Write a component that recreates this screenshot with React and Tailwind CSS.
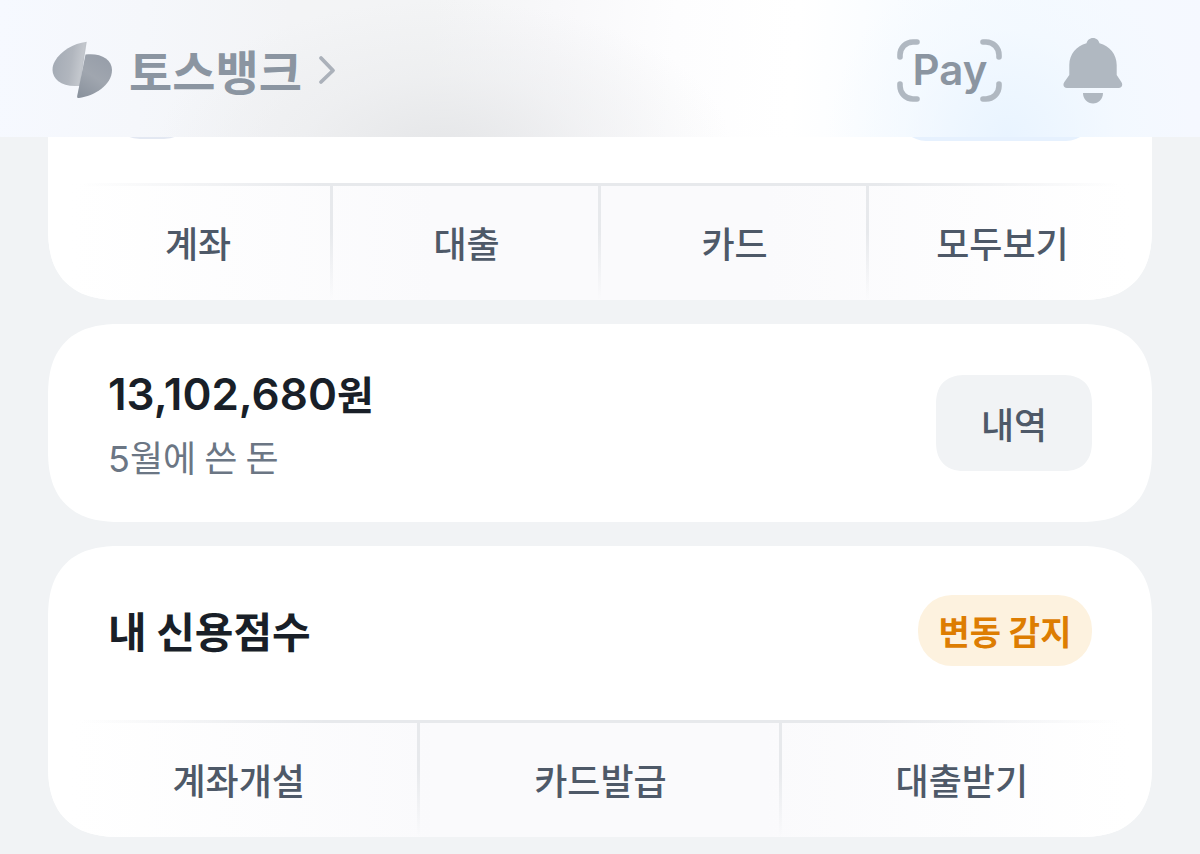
import React from "react";

function BankLogo() {
  return (
    <svg viewBox="0 0 62 58" className="h-[58px] w-[62px] shrink-0" aria-hidden="true">
      <defs>
        <linearGradient id="leafLeft" x1="0" y1="0.3" x2="1" y2="0.5">
          <stop offset="0" stopColor="#a3aab4" />
          <stop offset="0.55" stopColor="#b1b6be" />
          <stop offset="0.85" stopColor="#c3c7cd" />
          <stop offset="1" stopColor="#b5bac2" />
        </linearGradient>
        <linearGradient id="leafRight" x1="0.7" y1="0" x2="0.2" y2="1">
          <stop offset="0" stopColor="#979ea9" />
          <stop offset="0.5" stopColor="#a0a6af" />
          <stop offset="1" stopColor="#8b939e" />
        </linearGradient>
      </defs>
      <path d="M35.7 0.800 C22 2.500 10 10 4 20 C-3 32 5 45 24 45 L29 45 Z" fill="url(#leafLeft)" />
      <path d="M34.500 13.500 C49 11.500 61 18 61 29 C61 44 43 55 28 57 C26.300 57.200 26 56.300 26.200 55 Z" fill="url(#leafRight)" />
    </svg>
  );
}

function Chevron() {
  return (
    <svg viewBox="0 0 18 30" className="h-[30px] w-[18px] shrink-0" fill="none" aria-hidden="true">
      <path d="M3 3 L15 15.500 L3 27" stroke="#abb1ba" strokeWidth="3.800" strokeLinecap="round" strokeLinejoin="round" />
    </svg>
  );
}

function PayFrame() {
  return (
    <svg viewBox="0 0 106 64" className="absolute inset-0 h-full w-full" fill="none" aria-hidden="true">
      <g stroke="#b0b8c1" strokeWidth="5.600" strokeLinecap="round">
        <path d="M20 4 H16 A13 13 0 0 0 3 17 V19" />
        <path d="M86 4 H89 A13 13 0 0 1 102 17 V19" />
        <path d="M3 46 V48 A13 13 0 0 0 16 61 H20" />
        <path d="M102 46 V48 A13 13 0 0 1 89 61 H86" />
      </g>
    </svg>
  );
}

function Bell() {
  return (
    <svg viewBox="0 0 60 66" className="h-[66px] w-[60px]" fill="#b0b8c1" aria-hidden="true">
      <path d="M30 0 C33.500 0 35.700 2.400 36.500 5.200 C46.500 8 53.700 16 53.700 27 V37 L58.500 44.200 C60.200 47.300 58.800 50 55.500 50 H4 C0.800 50 -0.500 47.300 1.200 44.200 L6.300 37 V27 C6.300 16 13.500 8 23.500 5.200 C24.300 2.400 26.500 0 30 0 Z" />
      <path d="M20 55 H40 C40 61 35.500 65.500 30 65.500 C24.500 65.500 20 61 20 55 Z" />
    </svg>
  );
}

function ActionBar({ items, className }) {
  return (
    <div className="bg-[linear-gradient(90deg,#ffffff_2%,#fafafc_35%,#fafafc_65%,#ffffff_98%)]">
      <div className="h-[3px] bg-[linear-gradient(90deg,transparent_3%,#e7e9ec_25%,#e7e9ec_75%,transparent_97%)]" />
      <ul className={"flex " + className}>
        {items.map((label, i) => (
          <li key={label} className="flex flex-1">
            {i > 0 && <span className="-ml-[2px] w-[3px] shrink-0 bg-linear-to-b from-[#e7e9ec] from-40% to-transparent" />}
            <button type="button" className="h-[114px] flex-1 pb-[2px] text-center text-[36px] leading-[52px] font-medium text-[#4e5968]">
              {label}
            </button>
          </li>
        ))}
      </ul>
    </div>
  );
}

export default function App() {
  return (
    <div className="min-h-screen bg-[#f1f3f5] pb-4 font-['Noto_Sans_CJK_KR',sans-serif] text-[#191f28]">
      <header className="relative z-10 flex h-[137px] items-start justify-between bg-white bg-[radial-gradient(ellipse_15%_130%_at_84%_100%,#e9f4ff_0%,#f1f8ff80_60%,transparent_100%),radial-gradient(ellipse_24%_110%_at_37%_110%,#e5e6e8_0%,#e9eaec80_50%,transparent_100%),linear-gradient(94deg,#f6f9ff_0%,#f5f7fb_12%,#f3f4f6_24%,#f3f4f5_36%,#f8f8fa_46%,#fdfdfe_56%,#ffffff_66%,#f9fcff_74%,#f5faff_85%,#f5f8ff_100%)] pr-[77px] pl-[51px]">
        <a href="#bank" className="flex items-center pt-[35px]">
          <BankLogo />
          <span className="ml-4 text-[47px] leading-[70px] font-bold text-[#8b95a1]">토스뱅크</span>
          <span className="ml-4">
            <Chevron />
          </span>
        </a>
        <div className="flex items-start gap-[60px] pt-[38px]">
          <button type="button" className="relative h-16 w-[106px]">
            <PayFrame />
            <span className="relative font-[Inter,sans-serif] text-[42px] leading-[64px] font-semibold text-[#8b95a1]">Pay</span>
          </button>
          <button type="button" aria-label="알림">
            <Bell />
          </button>
        </div>
      </header>

      <main className="flex flex-col gap-6 px-12">
        <section className="-mt-24 overflow-hidden rounded-b-[72px] bg-white [corner-shape:superellipse(1.3)]">
          <div className="flex h-[142px] items-start justify-between px-[60px]">
            <span className="h-[98px] w-[88px] rounded-[32px] bg-[#e3e8f2]" />
            <span className="h-[100px] w-[192px] rounded-[26px] bg-[#e6f1fe]" />
          </div>
          <ActionBar items={["계좌", "대출", "카드", "모두보기"]} className="px-4" />
        </section>

        <section className="flex h-[198px] items-center justify-between rounded-[72px] bg-white px-[60px] [corner-shape:superellipse(1.3)]">
          <div className="pt-2">
            <p className="text-[40px] leading-[60px] font-bold">
              <span className="font-[Inter,sans-serif] text-[44px] font-semibold">13,102,680</span>원
            </p>
            <p className="text-[36px] leading-[64px] text-[#6b7684]">
              <span className="font-[Inter,sans-serif]">5</span>월에 쓴 돈
            </p>
          </div>
          <button type="button" className="h-24 w-[156px] rounded-[30px] bg-[#f1f3f5] text-[36px] font-medium text-[#4e5968] [corner-shape:superellipse(1.3)]">
            내역
          </button>
        </section>

        <section className="overflow-hidden rounded-[72px] bg-white [corner-shape:superellipse(1.3)]">
          <div className="flex h-[174px] items-center justify-between px-[60px] pb-[6px]">
            <h2 className="text-[42px] leading-[60px] font-bold">내 신용점수</h2>
            <span className="flex h-[71px] w-[174px] items-center justify-center rounded-[34px] bg-[#fdf2df] text-[34px] font-bold text-[#dd7d02]">
              변동 감지
            </span>
          </div>
          <ActionBar items={["계좌개설", "카드발급", "대출받기"]} className="px-[10px]" />
        </section>
      </main>
    </div>
  );
}
